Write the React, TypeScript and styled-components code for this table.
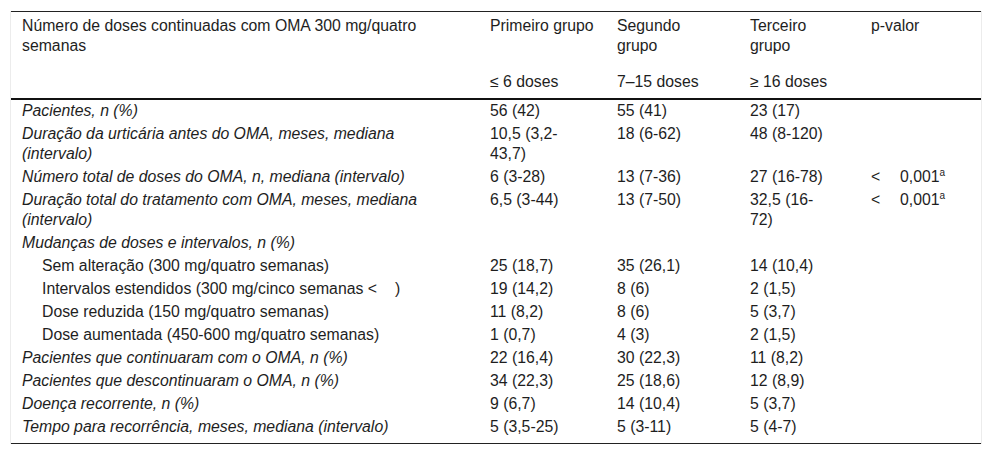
import React from 'react';
import styled, { createGlobalStyle } from 'styled-components';

const GlobalStyle = createGlobalStyle`
  html, body {
    margin: 0;
    padding: 0;
    background: #fff;
  }
  body {
    font-family: "Liberation Sans", Arial, Helvetica, sans-serif;
    color: #1e1e1e;
  }
`;

const Frame = styled.div`
  margin: 11px 0 0 10px;
  width: 970px;
  border-left: 1px solid #ececec;
  border-right: 1px solid #ececec;
`;

const Table = styled.table`
  width: 970px;
  border-collapse: collapse;
  table-layout: fixed;
  font-size: 15.8px;
  line-height: 20px;
  border-top: 1px solid #222;
  border-bottom: 1px solid #222;
`;

const Col = styled.col<{ $w: number }>`
  width: ${p => p.$w}px;
`;

const HeadCell = styled.th<{ $sub?: boolean }>`
  font-weight: normal;
  text-align: left;
  vertical-align: top;
  padding: ${p => (p.$sub ? '8px 11px 6px' : '4px 11px 8px')};
  border-bottom: ${p => (p.$sub ? '2px solid #111' : 'none')};
`;

const Row = styled.tr`
  &:last-child td {
    padding-bottom: 6px;
  }
`;

const Cell = styled.td<{ $italic?: boolean; $indent?: boolean }>`
  vertical-align: baseline;
  padding: 1px 11px 2px ${p => (p.$indent ? '31px' : '11px')};
  font-style: ${p => (p.$italic ? 'italic' : 'normal')};
`;

const Lt = styled.span`
  display: inline-block;
  width: 29px;
`;

const Gap = styled.span`
  display: inline-block;
  width: 18px;
`;

const Sup = styled.sup`
  font-size: 10px;
  line-height: 0;
`;

type DataRow = {
  label: React.ReactNode;
  sub?: boolean;
  values: React.ReactNode[];
  p?: boolean;
};

const widths = [468, 127, 133, 121, 121];

const rows: DataRow[] = [
  { label: 'Pacientes, n (%)', values: ['56 (42)', '55 (41)', '23 (17)'] },
  {
    label: (
      <>
        Duração da urticária antes do OMA, meses, mediana
        <br />
        (intervalo)
      </>
    ),
    values: [
      <>
        10,5 (3,2-
        <br />
        43,7)
      </>,
      '18 (6-62)',
      '48 (8-120)',
    ],
  },
  {
    label: 'Número total de doses do OMA, n, mediana (intervalo)',
    values: ['6 (3-28)', '13 (7-36)', '27 (16-78)'],
    p: true,
  },
  {
    label: (
      <>
        Duração total do tratamento com OMA, meses, mediana
        <br />
        (intervalo)
      </>
    ),
    values: [
      '6,5 (3-44)',
      '13 (7-50)',
      <>
        32,5 (16-
        <br />
        72)
      </>,
    ],
    p: true,
  },
  { label: 'Mudanças de doses e intervalos, n (%)', values: ['', '', ''] },
  {
    label: 'Sem alteração (300 mg/quatro semanas)',
    sub: true,
    values: ['25 (18,7)', '35 (26,1)', '14 (10,4)'],
  },
  {
    label: (
      <>
        Intervalos estendidos (300 mg/cinco semanas &lt;
        <Gap />)
      </>
    ),
    sub: true,
    values: ['19 (14,2)', '8 (6)', '2 (1,5)'],
  },
  {
    label: 'Dose reduzida (150 mg/quatro semanas)',
    sub: true,
    values: ['11 (8,2)', '8 (6)', '5 (3,7)'],
  },
  {
    label: 'Dose aumentada (450-600 mg/quatro semanas)',
    sub: true,
    values: ['1 (0,7)', '4 (3)', '2 (1,5)'],
  },
  {
    label: 'Pacientes que continuaram com o OMA, n (%)',
    values: ['22 (16,4)', '30 (22,3)', '11 (8,2)'],
  },
  {
    label: 'Pacientes que descontinuaram o OMA, n (%)',
    values: ['34 (22,3)', '25 (18,6)', '12 (8,9)'],
  },
  { label: 'Doença recorrente, n (%)', values: ['9 (6,7)', '14 (10,4)', '5 (3,7)'] },
  {
    label: 'Tempo para recorrência, meses, mediana (intervalo)',
    values: ['5 (3,5-25)', '5 (3-11)', '5 (4-7)'],
  },
];

const App: React.FC = () => {
  return (
    <>
      <GlobalStyle />
      <Frame>
        <Table>
          <colgroup>
            {widths.map((w, i) => (
              <Col key={i} $w={w} />
            ))}
          </colgroup>
          <thead>
            <tr>
              <HeadCell>
                Número de doses continuadas com OMA 300 mg/quatro
                <br />
                semanas
              </HeadCell>
              <HeadCell>Primeiro grupo</HeadCell>
              <HeadCell>
                Segundo
                <br />
                grupo
              </HeadCell>
              <HeadCell>
                Terceiro
                <br />
                grupo
              </HeadCell>
              <HeadCell>p-valor</HeadCell>
            </tr>
            <tr>
              <HeadCell $sub />
              <HeadCell $sub>≤ 6 doses</HeadCell>
              <HeadCell $sub>7–15 doses</HeadCell>
              <HeadCell $sub>≥ 16 doses</HeadCell>
              <HeadCell $sub />
            </tr>
          </thead>
          <tbody>
            {rows.map((r, i) => (
              <Row key={i}>
                <Cell $italic={!r.sub} $indent={r.sub}>
                  {r.label}
                </Cell>
                {r.values.map((v, j) => (
                  <Cell key={j}>{v}</Cell>
                ))}
                <Cell>
                  {r.p && (
                    <>
                      <Lt>&lt;</Lt>0,001<Sup>a</Sup>
                    </>
                  )}
                </Cell>
              </Row>
            ))}
          </tbody>
        </Table>
      </Frame>
    </>
  );
};

export default App;
